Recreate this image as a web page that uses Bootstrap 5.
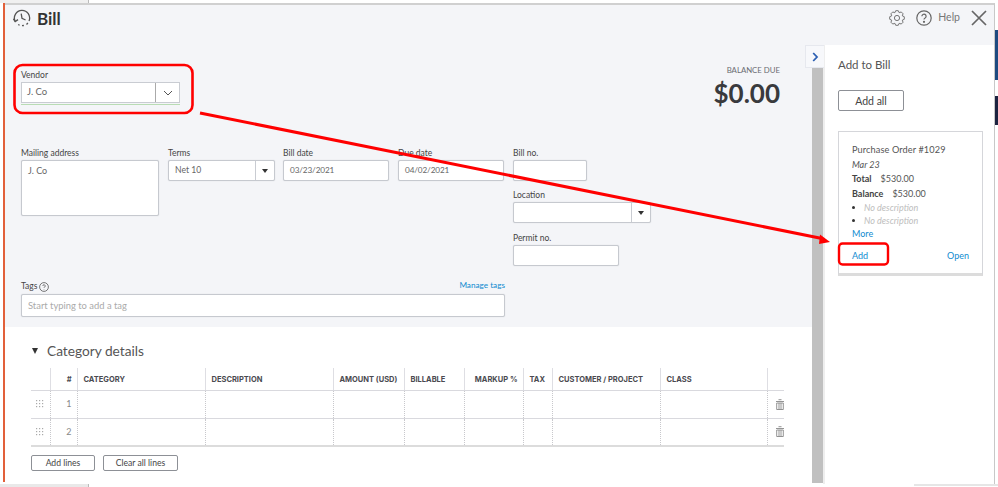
<!DOCTYPE html>
<html lang="en">
<head>
<meta charset="utf-8">
<title>Bill</title>
<link href="https://cdn.jsdelivr.net/npm/bootstrap@5.3.0/dist/css/bootstrap.min.css" rel="stylesheet">
<style>
html,body{margin:0;width:998px;height:487px;overflow:hidden;background:#fff}
body{font-family:"Lato","Liberation Sans",sans-serif;color:#444;position:relative}
.edge-top,.edge-bottom{height:3px;flex:none}
.edge-top-tab{width:89px;background:#f0f0f0;border-right:1px solid #bbb}
.edge-bottom-tab{width:89px;background:#e9e9e9;border-right:1px solid #bbb}
.edge-bottom-right{width:84px;background:#e6e6e6;height:2px}
.mid{height:481px}
.win{width:992px;margin-left:3px;border-top:2px solid #d0d0d0;padding-left:2px;border-right:1px solid #c8c8c8;height:481px;position:relative}
.win::before{content:"";position:absolute;left:0;top:-2px;width:2px;height:479px;background:#e2603a}
.strip{width:3px;flex:none}
.blk-a{height:50px;margin-top:27px;background:#1d4a80}
.blk-b{height:29px;margin-top:16px;background:#1c2340}
.top-bar{height:40px;background:#f4f5f8;flex:none;padding:0 7px 14px 8px}
.bill-title{font-size:17px;font-weight:700;color:#333;margin:0 0 0 6px;line-height:1}
.help-txt{font-size:10.5px;color:#777;margin:0 11px 0 6px}
.gear-gap{margin-left:11px}
.work{height:439px}
.main-col{width:807px;flex:none}
.form-area{background:#f4f5f8;height:282px;padding:25px 0 0 16px;position:relative}
.scroller{width:13px;flex:none;padding-top:23px;background:#fff;border-right:2px solid #eee}
.scroller-top{background:#f4f5f8;height:23px;margin-top:-23px}
.scroller-bar{width:11px;height:415px;background:#c0c0c0}
.toggle-tab{position:absolute;left:800px;top:0;width:19px;height:23px;background:#f7f8fb;border:1px solid #e6e8ee;border-right:0;display:flex;align-items:center;justify-content:center}
.lbl{font-size:8.5px;line-height:10px;height:10px;color:#444;margin:0;display:block}
.fld{height:21px;border:1px solid #c6c9cf;background:#fff;border-radius:2px;font-size:8.6px;color:#666;padding:0 6px;line-height:19px;box-shadow:0 0 1px #c6c9cf}
.date-txt{font-size:8.2px;letter-spacing:-.12px}
.vendor-wrap{width:159px;margin-top:2px}
.vendor-fld{height:21px;background:#fff;border:1px solid #c9ccd2;font-size:9.5px;color:#666}
.vendor-val{padding-left:5px}
.vendor-btn{width:24px;height:100%;border-left:1px solid #aaa}
.vendor-line{height:1px;background:#b9dcb4;margin-top:1px}
.row-two{margin-top:43px;gap:9px}
.row-two .fld{margin-top:2px}
.col-addr{width:138px}.col-terms{width:107px}.col-date{width:106px}.col-right{width:138px}
.gap-mini{margin-left:-1px}
.addr-box{height:56px;padding:2px 6px;line-height:15px;font-size:9px}
.row-two .pick{padding:0 0 0 6px}
.pick-arrow{width:19px;height:100%;border-left:1px solid #c9ccd2}
.caret{width:0;height:0;border-left:3px solid transparent;border-right:3px solid transparent;border-top:4px solid #333}
.w-bill{width:74px}.w-permit{width:106px}
.mt-loc{margin-top:9px}
.mt-perm{margin-top:10px}
.balance{position:absolute;right:32px;top:20px;text-align:right}
.bal-lbl{font-size:7.8px;color:#6b6c72;line-height:10px}
.bal-val{font-size:26px;font-weight:700;color:#393a3d;line-height:30px;margin-top:3px}
.tags-row{width:484px;position:absolute;left:16px;top:236px}
.tag-hd{height:13px}
.q-mini{margin-left:2px}
.mng{font-size:8.2px;color:#0f8bd0;text-decoration:none;line-height:10px;margin-top:-1px}
.tag-in{height:23px;width:100%;line-height:21px;color:#aaa;font-size:9.4px;padding:0 6px}
.cat-area{padding:15px 0 0 26px;background:#fff}
.cat-hd{font-size:13.7px;line-height:18px;color:#555;margin:0 0 8px 0;height:18px}
.tri{width:0;height:0;border-left:3.5px solid transparent;border-right:3.5px solid transparent;border-top:6px solid #333;margin:0 9px 0 1px}
.lines{width:753px;table-layout:fixed;border-collapse:collapse;margin:0}
.lines th{height:22px;font-size:7.5px;font-family:"Inter","Liberation Sans",sans-serif;font-weight:700;color:#4a4a50;padding:2px 6px 0;background:#fff;border-bottom:1px solid #d9d9de;border-right:1px solid #dedee3;white-space:nowrap;box-shadow:none;vertical-align:middle}
.lines td{height:28px;padding:0 6px;font-size:9px;color:#888;background:#fff;border-bottom:1px solid #d9d9de;border-right:1px dotted #c8c8cc;box-shadow:none;vertical-align:middle}
.lines tr:last-child td{border-bottom:2px solid #dcdcdc}
.lines th:last-child,.lines td:last-child{border-right:0;padding:0 0 0 8px}
.c1{width:19px}.c2{width:27px}.c3,.c4{width:128px}.c5{width:71px}.c6{width:60px}.c7{width:59px}.c8{width:29px}.c9{width:108px}.c10{width:107px}.c11{width:17px}
.lines .num{text-align:right;padding-right:5px}
.lines .grip{padding:0 0 0 5px}
.btn-lines{height:16px;font-size:8.6px;padding:0;border:1px solid #8d9096;border-radius:2px;color:#444;background:#fff;line-height:13px}
.w-add{width:64px}.w-clear{width:75px}
.lines-btns{margin-top:8px;gap:8px}
.side{width:169px;flex:none;background:#fff;padding:13px 0 0 13px}
.side-h{font-size:11.5px;color:#555;line-height:14px;margin:0}
.btn-all{width:66px;height:21px;font-size:10.5px;padding:0;border:1px solid #8d9096;border-radius:2px;color:#444;background:#fff;margin-top:18px;line-height:18px}
.po{width:145px;height:145px;margin-top:20px;border:1px solid #d5d6da;border-bottom:3px solid #dcdcdc;border-radius:0;padding:11px 13px 0 13px;font-size:9px;line-height:14.6px;color:#555;box-shadow:none}
.po b{color:#444}
.amt-a{margin-left:9px}
.amt-b{margin-left:9px}
.po-t{font-size:9.2px;letter-spacing:.1px}
.nodesc{color:#bdbdbd;font-style:italic;padding-left:12px;position:relative;line-height:13px}
.nodesc::before{content:"";position:absolute;left:0;top:5px;width:3px;height:3px;background:#333;border-radius:50%}
.lnk{color:#0f8bd0;text-decoration:none;font-size:9px}
.po-foot{margin-top:7px}
.overlay{position:absolute;left:0;top:0;width:998px;height:487px;pointer-events:none}
</style>
</head>
<body class="d-flex flex-column">
<div class="edge-top d-flex"><div class="edge-top-tab"></div></div>
<div class="mid d-flex">
  <div class="win d-flex flex-column">
    <div class="top-bar d-flex align-items-center">
      <svg width="18" height="18" viewBox="0 0 18 18" fill="none" stroke="#555" stroke-width="1.3"><path d="M2.2 12.4A7.6 7.6 0 1 1 16 12"/><path d="M14.9 14l-1.4 1.5M10.9 16.5l-1.9.2M6.6 16.3l-1.4-.8"/><path d="M8.2 4.6L9 9.3l3.6 1.7"/><path d="M.4 9.8l1.8 2.8 2.8-2"/></svg>
      <h1 class="bill-title">Bill</h1>
      <div class="ms-auto d-flex align-items-center">
        <svg width="16" height="16" viewBox="0 0 16 16" fill="none" stroke="#666" stroke-width=".9" stroke-linejoin="round"><path d="M6.71 .71H9.29L10.18 2.73 12.24 1.94 14.06 3.76 13.27 5.82 15.29 6.71V9.29L13.27 10.18 14.06 12.24 12.24 14.06 10.18 13.27 9.29 15.29H6.71L5.82 13.27 3.76 14.06 1.94 12.24 2.73 10.18 .71 9.29V6.71L2.73 5.82 1.94 3.76 3.76 1.94 5.82 2.73Z"/><circle cx="8" cy="8" r="2.6"/></svg>
        <svg class="gear-gap" width="16" height="16" viewBox="0 0 16 16" fill="none" stroke="#666" stroke-width="1.2"><circle cx="8" cy="8" r="7.2"/><path d="M5.9 6.2a2.1 2.1 0 1 1 3.2 1.8C8.400 8.400 8 8.800 8 9.600"/><circle cx="8" cy="11.800" r=".5" fill="#666"/></svg>
        <span class="help-txt">Help</span>
        <svg width="16" height="16" viewBox="0 0 16 16" fill="none" stroke="#666" stroke-width="1.7"><path d="M1 1l14 14M15 1L1 15"/></svg>
      </div>
    </div>
    <div class="work d-flex position-relative">
      <div class="main-col">
        <div class="form-area">
          <div class="balance">
            <div class="bal-lbl">BALANCE DUE</div>
            <div class="bal-val">$0.00</div>
          </div>
          <label class="lbl">Vendor</label>
          <div class="vendor-wrap">
            <div class="vendor-fld d-flex align-items-center">
              <span class="vendor-val flex-grow-1">J. Co</span>
              <span class="vendor-btn d-flex align-items-center justify-content-center">
                <svg width="10" height="6" viewBox="0 0 10 6" fill="none" stroke="#555" stroke-width="1"><path d="M1 1l4 4 4-4"/></svg>
              </span>
            </div>
            <div class="vendor-line"></div>
          </div>
          <div class="d-flex row-two">
            <div class="col-addr">
              <label class="lbl">Mailing address</label>
              <div class="fld addr-box">J. Co</div>
            </div>
            <div class="col-terms">
              <label class="lbl">Terms</label>
              <div class="fld pick d-flex align-items-center justify-content-between"><span>Net 10</span><span class="pick-arrow d-flex align-items-center justify-content-center"><i class="caret"></i></span></div>
            </div>
            <div class="col-date gap-mini">
              <label class="lbl">Bill date</label>
              <div class="fld date-txt">03/23/2021</div>
            </div>
            <div class="col-date">
              <label class="lbl">Due date</label>
              <div class="fld date-txt">04/02/2021</div>
            </div>
            <div class="col-right">
              <label class="lbl">Bill no.</label>
              <div class="fld w-bill"></div>
              <label class="lbl mt-loc">Location</label>
              <div class="fld pick d-flex justify-content-end"><span class="pick-arrow d-flex align-items-center justify-content-center"><i class="caret"></i></span></div>
              <label class="lbl mt-perm">Permit no.</label>
              <div class="fld w-permit"></div>
            </div>
          </div>
          <div class="tags-row">
            <div class="d-flex justify-content-between tag-hd">
              <label class="lbl">Tags<svg class="q-mini" width="10" height="10" viewBox="0 0 10 10" fill="none" stroke="#555" stroke-width=".8"><circle cx="5" cy="5" r="4.4"/><path d="M3.8 4a1.2 1.2 0 1 1 1.8 1c-.4.2-.6.4-.6.9M5 7.2v.4"/></svg></label>
              <a class="mng" href="#">Manage tags</a>
            </div>
            <div class="fld tag-in">Start typing to add a tag</div>
          </div>
        </div>
        <div class="cat-area">
          <h2 class="cat-hd fw-normal d-flex align-items-center"><i class="tri"></i>Category details</h2>
          <table class="table lines">
            <colgroup><col class="c1"><col class="c2"><col class="c3"><col class="c4"><col class="c5"><col class="c6"><col class="c7"><col class="c8"><col class="c9"><col class="c10"><col class="c11"></colgroup>
            <thead><tr><th></th><th class="num">#</th><th>CATEGORY</th><th>DESCRIPTION</th><th>AMOUNT (USD)</th><th>BILLABLE</th><th class="num">MARKUP %</th><th>TAX</th><th>CUSTOMER / PROJECT</th><th>CLASS</th><th></th></tr></thead>
            <tbody>
              <tr><td class="grip"><svg class="d-block" width="8" height="8" viewBox="0 0 8 8" fill="#aaa"><rect x="0" y="0" width="1.2" height="1.2"/><rect x="3" y="0" width="1.2" height="1.2"/><rect x="6" y="0" width="1.2" height="1.2"/><rect x="0" y="3" width="1.2" height="1.2"/><rect x="3" y="3" width="1.2" height="1.2"/><rect x="6" y="3" width="1.2" height="1.2"/><rect x="0" y="6" width="1.2" height="1.2"/><rect x="3" y="6" width="1.2" height="1.2"/><rect x="6" y="6" width="1.2" height="1.2"/></svg></td><td class="num">1</td><td></td><td></td><td></td><td></td><td></td><td></td><td></td><td></td><td><svg class="d-block" width="8" height="11" viewBox="0 0 8 11" fill="none" stroke="#888" stroke-width=".9"><path d="M0 2.500h8M2.500 .7h3M.7 4h6.600v6.500H.7zM3 4v6.500M5 4v6.500"/></svg></td></tr>
              <tr><td class="grip"><svg class="d-block" width="8" height="8" viewBox="0 0 8 8" fill="#aaa"><rect x="0" y="0" width="1.2" height="1.2"/><rect x="3" y="0" width="1.2" height="1.2"/><rect x="6" y="0" width="1.2" height="1.2"/><rect x="0" y="3" width="1.2" height="1.2"/><rect x="3" y="3" width="1.2" height="1.2"/><rect x="6" y="3" width="1.2" height="1.2"/><rect x="0" y="6" width="1.2" height="1.2"/><rect x="3" y="6" width="1.2" height="1.2"/><rect x="6" y="6" width="1.2" height="1.2"/></svg></td><td class="num">2</td><td></td><td></td><td></td><td></td><td></td><td></td><td></td><td></td><td><svg class="d-block" width="8" height="11" viewBox="0 0 8 11" fill="none" stroke="#888" stroke-width=".9"><path d="M0 2.500h8M2.500 .7h3M.7 4h6.600v6.500H.7zM3 4v6.500M5 4v6.500"/></svg></td></tr>
            </tbody>
          </table>
          <div class="d-flex lines-btns">
            <button type="button" class="btn btn-lines w-add">Add lines</button>
            <button type="button" class="btn btn-lines w-clear">Clear all lines</button>
          </div>
        </div>
      </div>
      <div class="scroller"><div class="scroller-top"></div><div class="scroller-bar"></div></div>
      <div class="toggle-tab"><svg width="7" height="10" viewBox="0 0 7 10" fill="none" stroke="#2c5fb3" stroke-width="1.8"><path d="M1.2 1l3.800 4-3.800 4"/></svg></div>
      <aside class="side">
        <h3 class="side-h fw-normal">Add to Bill</h3>
        <button type="button" class="btn btn-all d-block">Add all</button>
        <div class="card po">
          <div class="po-t">Purchase Order #1029</div>
          <div class="fst-italic">Mar 23</div>
          <div><b>Total</b><span class="amt-a">$530.00</span></div>
          <div><b>Balance</b><span class="amt-b">$530.00</span></div>
          <div class="nodesc">No description</div>
          <div class="nodesc">No description</div>
          <a class="lnk d-block" href="#">More</a>
          <div class="d-flex justify-content-between po-foot"><a class="lnk" href="#">Add</a><a class="lnk" href="#">Open</a></div>
        </div>
      </aside>
    </div>
  </div>
  <div class="strip"><div class="blk-a"></div><div class="blk-b"></div></div>
</div>
<div class="edge-bottom d-flex justify-content-between"><div class="edge-bottom-tab"></div><div class="edge-bottom-right"></div></div>
<svg class="overlay" viewBox="0 0 998 487" fill="none">
  <rect x="14.500" y="65" width="178" height="48" rx="8" stroke="#f00" stroke-width="2.600"/>
  <path d="M200 113L822 238.500" stroke="#f00" stroke-width="3"/>
  <path d="M830 242L820 234.500 819 244z" fill="#f00"/>
  <rect x="839" y="243.500" width="49" height="21" rx="3.500" stroke="#f00" stroke-width="2.400"/>
</svg>
</body>
</html>
